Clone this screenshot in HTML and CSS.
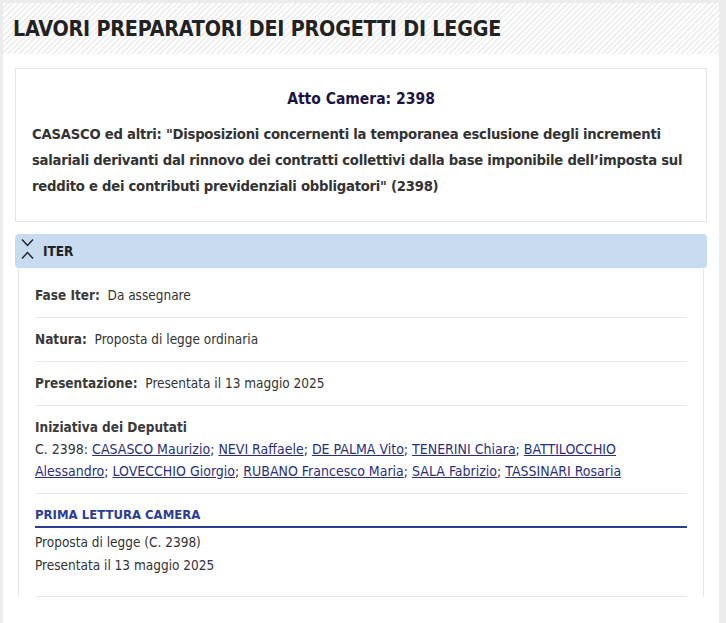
FILE: index.html
```html
<!DOCTYPE html>
<html lang="it">
<head>
<meta charset="utf-8">
<title>Lavori preparatori</title>
<link rel="stylesheet" href="styles.css">
</head>
<body>
<div class="page">
  <header class="page-head">
    <h1 class="page-title">LAVORI PREPARATORI DEI PROGETTI DI LEGGE</h1>
  </header>
  <main class="content">
    <section class="card">
      <h2 class="atto">Atto Camera: 2398</h2>
      <p class="titolo">CASASCO ed altri: "Disposizioni concernenti la temporanea esclusione degli incrementi salariali derivanti dal rinnovo dei contratti collettivi dalla base imponibile dell’imposta sul reddito e dei contributi previdenziali obbligatori" (2398)</p>
    </section>
    <section class="acc">
      <div class="acc-head">
        <svg class="acc-icon" width="13" height="26" viewBox="0 0 13 26" aria-hidden="true">
          <path d="M1 1.5 L6.5 7.5 L12 1.5" fill="none" stroke="#222" stroke-width="1.4"/>
          <path d="M1 20.5 L6.5 14.5 L12 20.5" fill="none" stroke="#222" stroke-width="1.4"/>
        </svg>
        <span class="acc-title">ITER</span>
      </div>
      <div class="acc-body">
        <div class="row"><span class="lbl">Fase Iter:</span>&nbsp; Da assegnare</div>
        <div class="row"><span class="lbl">Natura:</span>&nbsp; Proposta di legge ordinaria</div>
        <div class="row"><span class="lbl">Presentazione:</span>&nbsp; Presentata il 13 maggio 2025</div>
        <div class="row">
          <div class="lbl">Iniziativa dei Deputati</div>
          <div class="deputati">C. 2398: <a href="#">CASASCO Maurizio</a>; <a href="#">NEVI Raffaele</a>; <a href="#">DE PALMA Vito</a>; <a href="#">TENERINI Chiara</a>; <a href="#">BATTILOCCHIO Alessandro</a>; <a href="#">LOVECCHIO Giorgio</a>; <a href="#">RUBANO Francesco Maria</a>; <a href="#">SALA Fabrizio</a>; <a href="#">TASSINARI Rosaria</a></div>
        </div>
        <div class="row row-lettura">
          <h3 class="lettura">PRIMA LETTURA CAMERA</h3>
          <div class="lettura-body">
            <div>Proposta di legge (C. 2398)</div>
            <div>Presentata il 13 maggio 2025</div>
          </div>
        </div>
      </div>
    </section>
  </main>
</div>
</body>
</html>
```
FILE: styles.css
```css
html, body {
  margin: 0;
  padding: 0;
}
body {
  background: #ececec;
  padding: 3px 7px 0 3px;
  font-family: "DejaVu Sans Condensed", "Liberation Sans Narrow", "Roboto", sans-serif;
  color: #333;
  font-size: 13.5px;
}
.page {
  background: #fff;
  min-height: 640px;
}
.page-head {
  height: 51px;
  background: repeating-linear-gradient(-45deg, #fff 0 2px, #f0f0f0 2px 4px);
  display: flex;
  align-items: center;
  padding-left: 10px;
}
.page-title {
  margin: 0;
  font-size: 21.3px;
  font-weight: bold;
  color: #222;
  letter-spacing: -0.2px;
}
.content {
  padding: 14px 12px 0 12px;
}
.card {
  border: 1px solid #e6e6e6;
  padding: 19px 16px 22px 16px;
}
.atto {
  margin: 0 0 11px;
  text-align: center;
  font-size: 15.5px;
  font-weight: bold;
  color: #1c1444;
  line-height: 22px;
}
.titolo {
  margin: 0;
  font-size: 14.7px;
  font-weight: bold;
  line-height: 26px;
  color: #333;
  letter-spacing: -0.25px;
}
.acc {
  margin-top: 12px;
}
.acc-head {
  height: 34px;
  background: #c8dbf1;
  border-radius: 4px;
  display: flex;
  align-items: center;
  padding-left: 6px;
  gap: 9px;
}
.acc-icon {
  display: block;
}
.acc-title {
  font-weight: bold;
  font-size: 13.5px;
  color: #222;
}
.acc-body {
  margin: 0 3px;
  border-left: 1px solid #e6e6e6;
  border-right: 1px solid #e6e6e6;
  padding: 6px 16px 0 16px;
}
.row {
  border-bottom: 1px solid #e8e8e8;
  padding: 10px 0 11px;
  line-height: 22px;
}
.lbl {
  font-weight: bold;
  color: #3a3a3a;
}
.deputati {
  font-size: 14px;
}
.row a {
  color: #2a2f7c;
  text-decoration: underline;
}
.row-lettura {
  padding-bottom: 19px;
}
.lettura {
  margin: 0;
  font-size: 13px;
  font-weight: bold;
  color: #2b3d97;
  line-height: 22px;
  border-bottom: 2px solid #2b3d97;
}
.lettura-body {
  padding-top: 3px;
  line-height: 23px;
}
```
